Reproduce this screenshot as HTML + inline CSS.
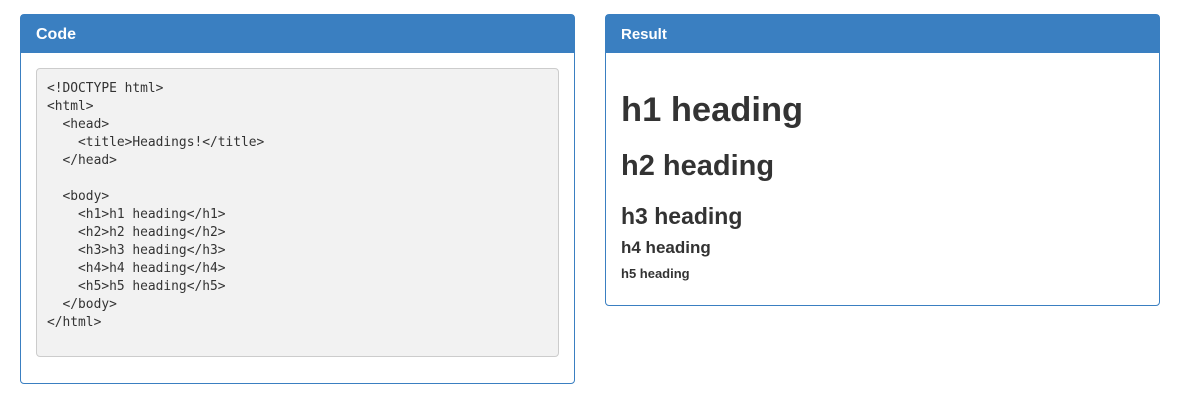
<!DOCTYPE html>
<html><head><style>
body{margin:0;background:#fff;font-family:"Liberation Sans",Arial,sans-serif;color:#333}
.p{position:absolute;border:1px solid #3a7fc1;border-radius:4px;background:#fff;box-sizing:border-box}
.h{background:#3a7fc1;color:#fff;font-weight:bold;height:38px;line-height:40px;padding-left:15px;font-size:16px}
pre{position:absolute;left:15px;top:53px;width:523px;height:289px;margin:0;box-sizing:border-box;background:#f2f2f2;border:1px solid #ccc;border-radius:4px;padding:11px 10px 7px;font-family:"DejaVu Sans Mono","Liberation Mono",monospace;font-size:12.9px;line-height:18px;color:#333}
.r .t{position:absolute;left:15px;font-weight:bold;white-space:nowrap;color:#333}
</style></head><body>
<div class="p" style="left:20px;top:14px;width:555px;height:370px">
<div class="h">Code</div>
<pre>&lt;!DOCTYPE html&gt;
&lt;html&gt;
  &lt;head&gt;
    &lt;title&gt;Headings!&lt;/title&gt;
  &lt;/head&gt;

  &lt;body&gt;
    &lt;h1&gt;h1 heading&lt;/h1&gt;
    &lt;h2&gt;h2 heading&lt;/h2&gt;
    &lt;h3&gt;h3 heading&lt;/h3&gt;
    &lt;h4&gt;h4 heading&lt;/h4&gt;
    &lt;h5&gt;h5 heading&lt;/h5&gt;
  &lt;/body&gt;
&lt;/html&gt;</pre>
</div>
<div class="p r" style="left:605px;top:14px;width:555px;height:292px">
<div class="h" style="font-size:15px">Result</div>
<div class="t" style="top:73px;font-size:34.5px;line-height:44px">h1 heading</div>
<div class="t" style="top:133px;font-size:29px;line-height:36px">h2 heading</div>
<div class="t" style="top:186px;font-size:23px;line-height:30px">h3 heading</div>
<div class="t" style="top:222px;font-size:17px;line-height:22px">h4 heading</div>
<div class="t" style="top:250px;font-size:13px;line-height:18px">h5 heading</div>
</div>
</body></html>
